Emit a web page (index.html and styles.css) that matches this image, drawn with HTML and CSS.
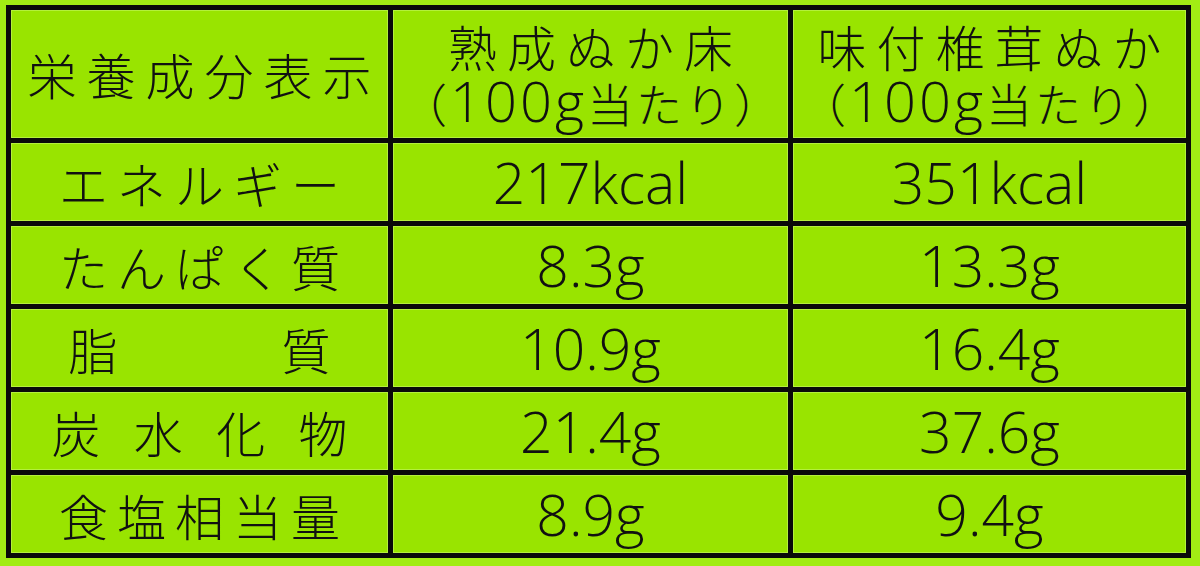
FILE: index.html
```html
<!DOCTYPE html>
<html lang="ja">
<head>
<meta charset="utf-8">
<title>栄養成分表示</title>
<link rel="stylesheet" href="styles.css">
</head>
<body>
<div class="table">
  <div class="cell head label"><span class="jp">栄養成分表示</span></div>
  <div class="cell head col"><span class="jp">熟成ぬか床</span><span class="jp sub">（<span class="lat">100g</span>当たり）</span></div>
  <div class="cell head col"><span class="jp">味付椎茸ぬか</span><span class="jp sub">（<span class="lat">100g</span>当たり）</span></div>

  <div class="cell label"><span class="jp">エネルギー</span></div>
  <div class="cell num">217kcal</div>
  <div class="cell num">351kcal</div>

  <div class="cell label"><span class="jp">たんぱく質</span></div>
  <div class="cell num">8.3g</div>
  <div class="cell num">13.3g</div>

  <div class="cell label"><span class="jp split"><span>脂</span><span>質</span></span></div>
  <div class="cell num">10.9g</div>
  <div class="cell num">16.4g</div>

  <div class="cell label"><span class="jp split wide"><span>炭</span><span>水</span><span>化</span><span>物</span></span></div>
  <div class="cell num">21.4g</div>
  <div class="cell num">37.6g</div>

  <div class="cell label"><span class="jp">食塩相当量</span></div>
  <div class="cell num">8.9g</div>
  <div class="cell num">9.4g</div>
</div>
</body>
</html>
```

FILE: styles.css
```css
html, body {
  margin: 0;
  padding: 0;
}
body {
  background: #a2ec14;
  width: 1200px;
  height: 566px;
  overflow: hidden;
  font-family: "Open Sans", "Noto Sans CJK JP", sans-serif;
  color: #111;
}
.table {
  margin: 5px 0 0 6px;
  width: 1185px;
  display: grid;
  grid-template-columns: 377px 395px 393px;
  grid-template-rows: 128px repeat(5, 78px);
  gap: 5px;
  padding: 5px;
  box-sizing: border-box;
  background: #0a0a0a;
}
.cell {
  background: #99e400;
  display: flex;
  flex-direction: column;
  align-items: center;
  justify-content: center;
  box-shadow: inset 0 0 0 1px #b4f03c;
}
.jp {
  font-family: "Noto Sans CJK JP", sans-serif;
  font-weight: 300;
  font-size: 49px;
  line-height: 57px;
  letter-spacing: 9px;
  margin-right: -9px;
  white-space: nowrap;
}
.head .jp {
  letter-spacing: 10px;
  margin-right: -10px;
  line-height: 56px;
}
.head .sub {
  font-size: 46px;
  letter-spacing: 3px;
  margin-right: -3px;
  line-height: 56px;
}
.lat {
  font-family: "Open Sans", sans-serif;
  font-weight: 300;
  font-size: 56px;
  line-height: 40px;
  letter-spacing: 3px;
}
.split {
  display: flex;
  justify-content: space-between;
  width: 262px;
  letter-spacing: 0;
  margin-right: 0;
}
.split.wide {
  width: 296px;
}
.num {
  font-size: 57px;
  line-height: 60px;
  font-weight: 300;
}
```
